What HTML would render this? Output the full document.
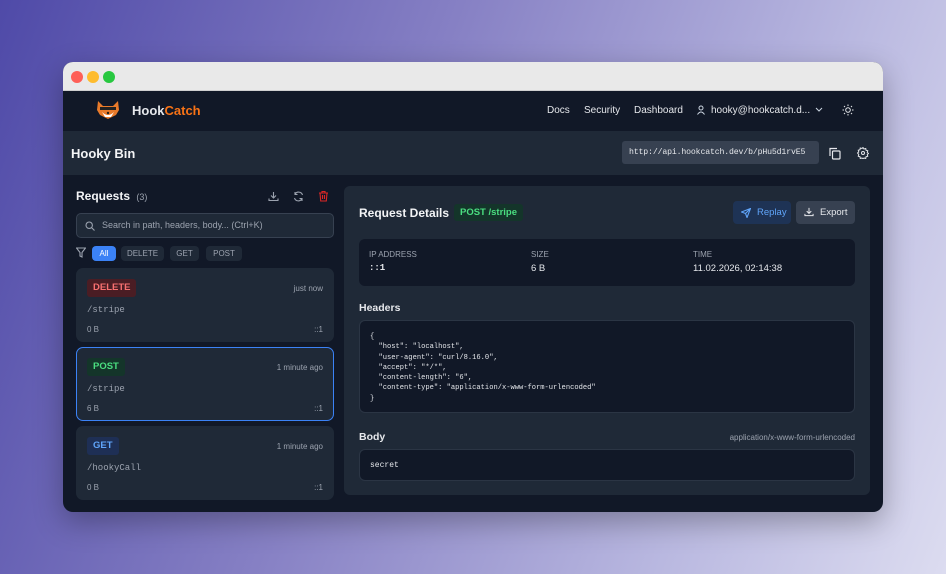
<!DOCTYPE html>
<html><head><style>
*{box-sizing:border-box;margin:0;padding:0}
body{width:946px;height:574px;overflow:hidden;font-family:"Liberation Sans",sans-serif;background:linear-gradient(110deg,#4f4aa8 0%,#8680c4 40%,#b9b8e0 75%,#dcdcf0 100%);position:relative}
.win{position:absolute;left:63px;top:62px;width:820px;height:450px;border-radius:10px;overflow:hidden;background:#111827;box-shadow:0 10px 30px rgba(0,0,0,.3)}
.tb{height:29px;background:#e9e9e9;border-bottom:1px solid #cfcfcf;position:relative}
.dot{position:absolute;top:9px;width:12px;height:12px;border-radius:50%}
.nav{height:40px;background:#111827;position:relative;color:#e5e7eb;font-size:10px}
.sub{height:44px;background:#1f2937;position:relative}
.abs{position:absolute}
.mono{font-family:"Liberation Mono",monospace}
.card{position:absolute;left:13px;width:258px;height:74px;background:#1f2937;border-radius:7px}
.badge{position:absolute;left:11px;top:11px;height:18px;padding:0 6px;border-radius:3px;font-size:9.5px;font-weight:bold;line-height:18px}
.path{position:absolute;left:11px;top:37px;font-size:9px;color:#9ca3af}
.sz{position:absolute;left:11px;top:57px;font-size:8px;color:#9ca3af}
.ip{position:absolute;right:11px;top:57px;font-size:8px;color:#9ca3af}
.tm{position:absolute;right:11px;top:16px;font-size:8px;color:#9ca3af}
.chip{position:absolute;top:184px;height:15px;border-radius:4px;background:#1f2937;color:#9ca3af;font-size:8px;line-height:15px;text-align:center}
.lbl{font-size:8px;color:#9ca3af}
</style></head><body>
<div class="win">
<div class="tb">
<div class="dot" style="left:8px;background:#fe5f57"></div>
<div class="dot" style="left:24px;background:#febc2e"></div>
<div class="dot" style="left:40px;background:#28c840"></div>
</div>
<div class="nav">
<div class="abs" style="left:31px;top:7px;width:28px;height:24px">
<svg width="28" height="24" viewBox="0 0 28 24"><path d="M4 3l5 5h10l5-5 1 9-3 5-8 4-8-4-3-5z" fill="#e97a2a"/><path d="M8 14q6 6 12 0l-3 5h-6z" fill="#fff"/><rect x="6" y="9" width="16" height="3" fill="#222"/><circle cx="14" cy="15" r="1.2" fill="#222"/></svg>
</div>
<div class="abs" style="left:69px;top:12px;font-size:13px;font-weight:bold">Hook<span style="color:#f97316">Catch</span></div>
<div class="abs" style="left:484px;top:14px">Docs</div>
<div class="abs" style="left:521px;top:14px">Security</div>
<div class="abs" style="left:571px;top:14px">Dashboard</div>
<svg class="abs" style="left:633px;top:14px" width="10" height="10" viewBox="0 0 10 10" fill="none" stroke="#cbd5e1"><circle cx="5" cy="3" r="2"/><path d="M1.5 9.5q3.5-5 7 0"/></svg>
<div class="abs" style="left:648px;top:14px">hooky@hookcatch.d...</div>
<svg class="abs" style="left:752px;top:16px" width="8" height="6" viewBox="0 0 8 6" fill="none" stroke="#cbd5e1"><path d="M1 1l3 3 3-3"/></svg>
<svg class="abs" style="left:779px;top:13px" width="12" height="12" viewBox="0 0 12 12" fill="none" stroke="#e5e7eb" stroke-width="1"><circle cx="6" cy="6" r="2.3"/><path d="M6 0.5v1.5M6 10v1.5M0.5 6h1.5M10 6h1.5M2 2l1 1M9 9l1 1M2 10l1-1M9 3l1-1"/></svg>
</div>
<div class="sub">
<div class="abs" style="left:8px;top:15px;font-size:13px;font-weight:bold;color:#f3f4f6">Hooky Bin</div>
<div class="abs mono" style="left:559px;top:10px;width:197px;height:23px;background:#374151;border-radius:3px;color:#e5e7eb;font-size:8.2px;letter-spacing:-0.15px;line-height:23px;padding-left:7px;overflow:hidden;white-space:nowrap">http://api.hookcatch.dev/b/pHu5d1rvE5</div>
<svg class="abs" style="left:766px;top:16px" width="12" height="13" viewBox="0 0 12 13" fill="none" stroke="#e5e7eb" stroke-width="1.2"><rect x="3.5" y="4" width="7.5" height="8" rx="1"/><path d="M1 9V1.5h7"/></svg>
<svg class="abs" style="left:794px;top:16px" width="12" height="12" viewBox="0 0 24 24" fill="none" stroke="#e5e7eb" stroke-width="2"><circle cx="12" cy="12" r="3"/><path d="M12 1l2 3 3.5-1 .5 3.5 3.5 1-1 3.5 2.5 2-2.5 2 1 3.5-3.5 1-.5 3.5-3.5-1-2 3-2-3-3.5 1-.5-3.5-3.5-1 1-3.5L1 12l2.5-2-1-3.5 3.5-1L6.5 2l3.5 1z"/></svg>
</div>
<div class="abs" style="left:13px;top:127px;font-size:12px;font-weight:bold;color:#f3f4f6">Requests <span style="font-size:9px;color:#9ca3af;font-weight:normal;margin-left:3px">(3)</span></div>
<svg class="abs" style="left:205px;top:129px" width="11" height="11" viewBox="0 0 11 11" fill="none" stroke="#9ca3af" stroke-width="1.1"><path d="M5.5 1v6M3 4.5l2.5 2.5L8 4.5M1 7.5v2h9v-2"/></svg>
<svg class="abs" style="left:230px;top:129px" width="11" height="11" viewBox="0 0 11 11" fill="none" stroke="#9ca3af" stroke-width="1.1"><path d="M9.5 4A4 4 0 0 0 2 3.5M1.5 7a4 4 0 0 0 7.5.5M2 1v2.5h2.5M9 10V7.5H6.5"/></svg>
<svg class="abs" style="left:255px;top:128px" width="11" height="12" viewBox="0 0 11 12" fill="none" stroke="#dc2626" stroke-width="1.1"><path d="M1 3h9M4 3V1.5h3V3M2 3l.7 8h5.6L9 3M4.5 5v4M6.5 5v4"/></svg>
<div class="abs" style="left:13px;top:151px;width:258px;height:25px;border:1px solid #374151;border-radius:5px;background:#1f2937"></div>
<svg class="abs" style="left:22px;top:159px" width="10" height="10" viewBox="0 0 10 10" fill="none" stroke="#9ca3af" stroke-width="1.1"><circle cx="4.2" cy="4.2" r="3.2"/><path d="M6.6 6.6L9.5 9.5"/></svg>
<div class="abs" style="left:39px;top:158px;font-size:9px;color:#9ca3af">Search in path, headers, body... (Ctrl+K)</div>
<svg class="abs" style="left:13px;top:185px" width="10" height="11" viewBox="0 0 10 11" fill="none" stroke="#9ca3af" stroke-width="1.1"><path d="M.5 1h9L6 5.5V10L4 9V5.5z"/></svg>
<div class="chip" style="left:29px;width:24px;background:#3b82f6;color:#fff">All</div>
<div class="chip" style="left:58px;width:43px">DELETE</div>
<div class="chip" style="left:107px;width:29px">GET</div>
<div class="chip" style="left:143px;width:36px">POST</div>

<div class="card" style="top:206px"><div class="badge" style="background:#4a1d24;color:#f87171">DELETE</div><div class="tm">just now</div><div class="path mono">/stripe</div><div class="sz">0 B</div><div class="ip">::1</div></div>
<div class="card" style="top:285px;border:1.5px solid #3b82f6"><div class="badge" style="background:#14352a;color:#4ade80;left:10px;top:10px">POST</div><div class="tm" style="top:15px;right:10px">1 minute ago</div><div class="path mono" style="left:10px;top:36px">/stripe</div><div class="sz" style="left:10px;top:56px">6 B</div><div class="ip" style="right:10px;top:56px">::1</div></div>
<div class="card" style="top:364px"><div class="badge" style="background:#1e2f55;color:#60a5fa">GET</div><div class="tm">1 minute ago</div><div class="path mono">/hookyCall</div><div class="sz">0 B</div><div class="ip">::1</div></div>

<div class="abs" style="left:281px;top:124px;width:526px;height:309px;background:#1f2937;border-radius:6px">
<div class="abs" style="left:15px;top:20px;font-size:12px;font-weight:bold;color:#f3f4f6">Request Details</div>
<div class="abs" style="left:110px;top:18px;height:17px;padding:0 6px;background:#14352a;color:#4ade80;font-size:9.5px;font-weight:bold;line-height:17px;border-radius:3px">POST /stripe</div>
<div class="abs" style="left:389px;top:15px;width:58px;height:23px;background:#1e3355;border-radius:4px;color:#60a5fa;font-size:9.5px;line-height:23px;padding-left:24px">Replay</div>
<svg class="abs" style="left:397px;top:22px" width="10" height="10" viewBox="0 0 10 10" fill="none" stroke="#60a5fa" stroke-width="1.1"><path d="M9.5.5L.5 4l4 1.5 1.5 4z M4.5 5.5L9.5.5"/></svg>
<div class="abs" style="left:452px;top:15px;width:59px;height:23px;background:#374151;border-radius:4px;color:#e5e7eb;font-size:9.5px;line-height:23px;padding-left:24px">Export</div>
<svg class="abs" style="left:460px;top:21px" width="10" height="10" viewBox="0 0 11 11" fill="none" stroke="#e5e7eb" stroke-width="1.1"><path d="M5.5 1v6M3 4.5l2.5 2.5L8 4.5M1 7.5v2h9v-2"/></svg>
<div class="abs" style="left:15px;top:53px;width:496px;height:47px;background:#111827;border-radius:6px">
<div class="abs lbl" style="left:10px;top:11px">IP ADDRESS</div><div class="abs mono" style="left:10px;top:24px;font-size:9px;color:#e5e7eb;font-weight:bold">::1</div>
<div class="abs lbl" style="left:172px;top:11px">SIZE</div><div class="abs" style="left:172px;top:24px;font-size:9.5px;color:#e5e7eb">6 B</div>
<div class="abs lbl" style="left:334px;top:11px">TIME</div><div class="abs" style="left:334px;top:24px;font-size:9.5px;color:#e5e7eb">11.02.2026, 02:14:38</div>
</div>
<div class="abs" style="left:15px;top:116px;font-size:10.5px;font-weight:bold;color:#e5e7eb">Headers</div>
<div class="abs" style="left:15px;top:134px;width:496px;height:93px;background:#111827;border:1px solid #2b3544;border-radius:6px">
<pre class="mono" style="position:absolute;left:10px;top:11px;font-size:7.1px;line-height:10.3px;color:#e5e7eb">{
  "host": "localhost",
  "user-agent": "curl/8.16.0",
  "accept": "*/*",
  "content-length": "6",
  "content-type": "application/x-www-form-urlencoded"
}</pre></div>
<div class="abs" style="left:15px;top:245px;font-size:10.5px;font-weight:bold;color:#e5e7eb">Body</div>
<div class="abs" style="right:15px;top:247px;font-size:8px;color:#9ca3af">application/x-www-form-urlencoded</div>
<div class="abs" style="left:15px;top:263px;width:496px;height:32px;background:#111827;border:1px solid #2b3544;border-radius:6px">
<div class="abs mono" style="left:10px;top:11px;font-size:8px;color:#e5e7eb">secret</div></div>
</div>
</div>
</body></html>
